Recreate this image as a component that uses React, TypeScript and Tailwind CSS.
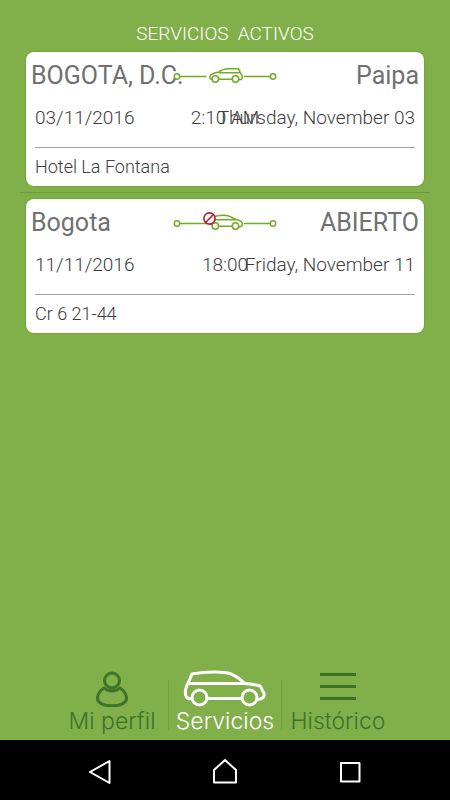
import React from "react";

type Service = {
  from: string;
  to: string;
  date: string;
  time: string;
  day: string;
  address: string;
  blocked: boolean;
};

const services: Service[] = [
  {
    from: "BOGOTA, D.C.",
    to: "Paipa",
    date: "03/11/2016",
    time: "2:10 AM",
    day: "Thursday, November 03",
    address: "Hotel La Fontana",
    blocked: false,
  },
  {
    from: "Bogota",
    to: "ABIERTO",
    date: "11/11/2016",
    time: "18:00",
    day: "Friday, November 11",
    address: "Cr 6 21-44",
    blocked: true,
  },
];

function RouteIcon({ blocked }: { blocked: boolean }) {
  return (
    <svg width="104" height="24" viewBox="0 0 104 24" fill="none" stroke="#73ab23" strokeWidth="1.5" aria-hidden="true">
      <circle cx="4" cy="12.500" r="2.700" />
      <circle cx="100" cy="12.500" r="2.700" />
      <path d="M6.700 12.500H33.500M71 12.500H97.300" />
      {blocked ? (
        <>
          <path d="M42 5.300C49 3.800 55 4 58 6L63 8.500C67 9.200 69 10.500 69.500 13Q69.500 15.500 66 16M42 8.800H63M46 15.300H59M40 15L37 12" />
          <circle cx="42.300" cy="15" r="3.200" fill="#fff" />
          <circle cx="62.500" cy="15" r="3.200" fill="#fff" />
          <circle cx="36.500" cy="7.500" r="5.600" fill="#fff" stroke="#b81c2c" strokeWidth="1.600" />
          <path d="M32.500 11.500L40.500 3.500" stroke="#b81c2c" strokeWidth="1.600" />
        </>
      ) : (
        <>
          <path d="M39.500 15.500C36.500 15.500 36.500 13 37.300 11.500C39 9.300 42.500 8.800 45.500 8.300C49 5.500 52 4.800 55.500 4.800H65.500L67.800 9.500C69.300 11.500 69.500 14 68.500 15.500H66M45.500 8.800H67M46 15.300H59" />
          <circle cx="42.300" cy="15" r="3.200" fill="#fff" />
          <circle cx="62.500" cy="15" r="3.200" fill="#fff" />
        </>
      )}
    </svg>
  );
}

function ServiceCard({ service }: { service: Service }) {
  return (
    <article className="rounded-lg bg-white pt-2 pb-[7px] text-[#3c3c3c] shadow-[0_0_1px_1px_#74a92e]">
      <div className="grid h-8 items-center px-[5px] text-[25px] leading-8 text-[#707070]">
        <h2 className="col-start-1 row-start-1 justify-self-start">{service.from}</h2>
        <span className="col-start-1 row-start-1 justify-self-end">{service.to}</span>
        <span className="col-start-1 row-start-1 justify-self-center">
          <RouteIcon blocked={service.blocked} />
        </span>
      </div>
      <div className="mx-[9px] font-light">
        <div className="mt-3.5 grid h-6 text-[19px] leading-6">
          <span className="col-start-1 row-start-1 justify-self-start">{service.date}</span>
          <span className="col-start-1 row-start-1 justify-self-center">{service.time}</span>
          <span className="col-start-1 row-start-1 justify-self-end">{service.day}</span>
        </div>
        <hr className="mt-[17px] border-[#a0a0a0]" />
        <p className="mt-[7px] text-[18px] leading-6">{service.address}</p>
      </div>
    </article>
  );
}

function Divider() {
  return <span className="mb-[5px] h-[50px] w-px bg-[#71a03c]" aria-hidden="true" />;
}

export default function App() {
  return (
    <div className="flex min-h-screen flex-col bg-[#81af4a] font-['Roboto',sans-serif]">
      <main className="flex-1 px-5 pt-[22px]">
        <h1 className="text-center text-[19px] leading-6 font-light whitespace-pre text-white">{"SERVICIOS  ACTIVOS"}</h1>
        <ul className="mt-1.5 divide-y divide-[#6e9c3b]">
          {services.map((service) => (
            <li key={service.date} className="px-1.5 pb-1.5 not-first:pt-1.5">
              <ServiceCard service={service} />
            </li>
          ))}
        </ul>
      </main>

      <nav
        aria-label="Principal"
        className="mx-auto flex w-full max-w-[338px] items-end pb-[5px] font-['Inter',sans-serif] text-[23px] leading-7 font-light text-[#3f7229]"
      >
        <button className="flex flex-1 basis-0 flex-col items-center whitespace-nowrap">
          <svg width="40" height="40" viewBox="0 0 40 40" fill="none" stroke="currentColor" strokeWidth="3" aria-hidden="true">
            <circle cx="20" cy="13.500" r="7.500" />
            <path d="M12 21C7 23.500 5.300 29 5.500 32C6.500 41 33.500 41 34.500 32C34.700 29 33 23.500 28 21C23.500 25 16.500 25 12 21Z" />
          </svg>
          Mi perfil
        </button>
        <Divider />
        <button className="flex flex-1 basis-0 flex-col items-center whitespace-nowrap text-white" aria-current="page">
          <svg width="84" height="40" viewBox="0 0 84 40" fill="none" stroke="currentColor" strokeWidth="3" strokeLinecap="round" strokeLinejoin="round" aria-hidden="true">
            <path d="M8 32C3 32 2 28 2.500 24C2.500 20 5 17 9 7C22 4.500 35 4.500 45 6C52 7.500 57 12 62 16.500C68 17 73 17.500 77 19C79 21 79 24 81 26Q82 32 75 32.500M6 16.500H62M25 31.500H58" />
            <circle cx="16.500" cy="30.500" r="7.500" />
            <circle cx="66.500" cy="30.500" r="7.500" />
          </svg>
          Servicios
        </button>
        <Divider />
        <button className="flex flex-1 basis-0 flex-col items-center whitespace-nowrap">
          <svg width="40" height="40" viewBox="0 0 40 40" fill="none" stroke="currentColor" strokeWidth="3" aria-hidden="true">
            <path d="M2 7.500H38M2 19.500H38M2 31.500H38" />
          </svg>
          Histórico
        </button>
      </nav>

      <footer className="grid h-[60px] grid-cols-3 items-center bg-black px-[37px] text-white">
        <button className="flex justify-center" aria-label="Atrás">
          <svg width="28" height="28" viewBox="0 0 28 28" fill="none" stroke="currentColor" strokeWidth="2" strokeLinejoin="round" aria-hidden="true">
            <path d="M23.500 5V27L4 16Z" />
          </svg>
        </button>
        <button className="flex justify-center" aria-label="Inicio">
          <svg width="28" height="28" viewBox="0 0 28 28" fill="none" stroke="currentColor" strokeWidth="2" strokeLinejoin="round" aria-hidden="true">
            <path d="M3 14L14 4L25 14V26.500H3Z" />
          </svg>
        </button>
        <button className="flex justify-center" aria-label="Recientes">
          <svg width="28" height="28" viewBox="0 0 28 28" fill="none" stroke="currentColor" strokeWidth="2" strokeLinejoin="round" aria-hidden="true">
            <path d="M5 7H23.500V25.500H5Z" />
          </svg>
        </button>
      </footer>
    </div>
  );
}
